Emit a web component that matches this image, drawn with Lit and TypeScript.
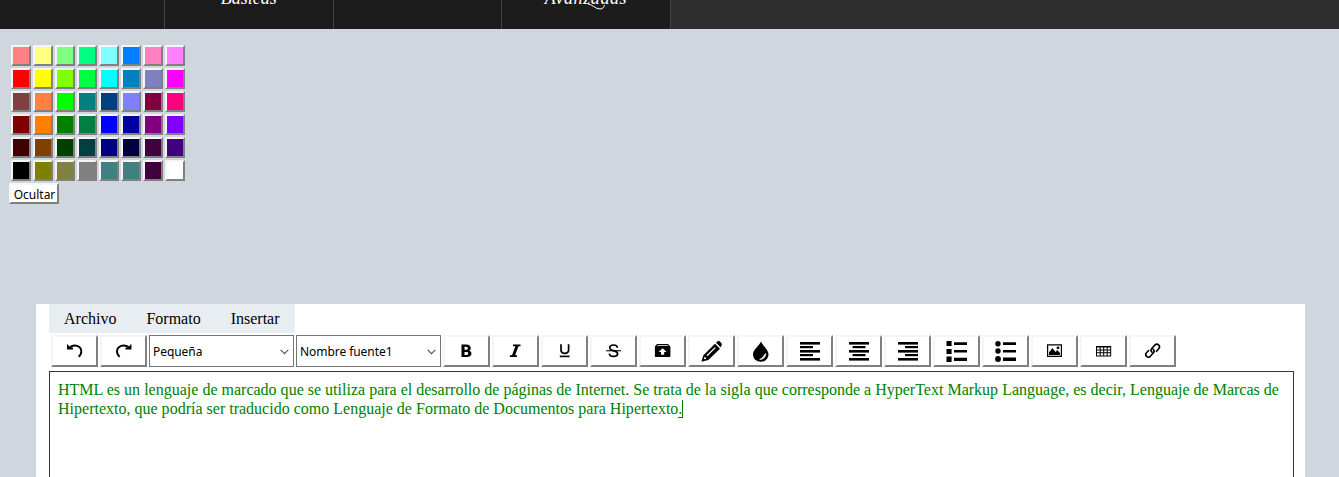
import { LitElement, html, css, svg } from "lit";
import { customElement } from "lit/decorators.js";

const COLORS = [
  "#ff8080","#ffff80","#80ff80","#00ff80","#80ffff","#0080ff","#ff80c0","#ff80ff",
  "#ff0000","#ffff00","#80ff00","#00ff40","#00ffff","#0080c0","#8080c0","#ff00ff",
  "#804040","#ff8040","#00ff00","#008080","#004080","#8080ff","#800040","#ff0080",
  "#800000","#ff8000","#008000","#008040","#0000ff","#0000a0","#800080","#8000ff",
  "#400000","#804000","#004000","#004040","#000080","#000040","#400040","#400080",
  "#000000","#808000","#808040","#808080","#408080","#408080","#400040","#ffffff",
];

const bars = (edge: "l" | "c" | "r") =>
  [20, 13, 20, 13, 20].map((w, i) => {
    const x = 14 + (edge === "l" ? 0 : edge === "c" ? (20 - w) / 2 : 20 - w);
    return svg`<rect x=${x} y=${[7, 11, 15, 19, 23][i]} width=${w} height=${i % 2 ? 2.2 : 2.6}/>`;
  });

// Glyphs share the 47x32 box of a toolbar button.
const ICONS = {
  undo: svg`<path d="M18.5 12.6C23.5 8.4 30 11 30.3 16.2C30.3 18.8 29.4 20.4 27.6 21.8" fill="none" stroke="#000" stroke-width="1.9"/><path d="M16 9.2L17.2 9.8L18.4 12L22 12.8V14.6H16Z"/>`,
  redo: svg`<path d="M29.1 12.6C24.1 8.4 17.3 11 17 16.2C17 18.8 17.9 20.4 19.7 21.8" fill="none" stroke="#000" stroke-width="1.9"/><path d="M31.4 9.2L30.2 9.8L29 12L25.4 12.8V14.6H31.4Z"/>`,
  bold: svg`<path fill-rule="evenodd" d="M18.5 9.5H23.4C28.4 9.5 28.8 14.9 26.2 15.7C29.8 16.7 29.2 22 24 22H18.5ZM21.5 11.7V14.8H23.2C25.5 14.8 25.5 11.7 23.2 11.7ZM21.5 17V19.9H23.5C25.9 19.9 25.9 17 23.5 17Z"/>`,
  italic: svg`<path d="M21 9.5H28.5V11.2H26.5L23.1 20.3H25V22H17.8V20.3H20L23.4 11.2H21Z"/>`,
  underline: svg`<path d="M20 9.2V15C20 19.4 27.6 19.4 27.6 15V9.2" fill="none" stroke="#000" stroke-width="1.7"/><path d="M18.8 20.6H28.6V22.2H18.8Z"/>`,
  strike: svg`<path d="M27.4 12.8C27.2 9 19.8 9.2 19.8 12.8C19.8 14.7 22 15.4 24 15.9C26.4 16.5 27.8 17.2 27.6 18.8C27.2 22.4 19.4 22.2 19.4 18.4" fill="none" stroke="#000" stroke-width="1.7"/><path d="M16.2 15.2H31V16.3H16.2Z"/>`,
  archive: svg`<path fill-rule="evenodd" d="M18 9H29L31.4 11.6V21C31.4 21.6 31 22 30.4 22H16.9C16.3 22 15.9 21.6 15.9 21V11.6ZM18.5 10.3L17.8 11.1H29.5L28.7 10.3ZM23.6 13.2L19.6 17H22V19.7H25.2V17H27.7Z"/>`,
  pencil: svg`<path fill-rule="evenodd" d="M27 8.7L32 13.7L20.3 24.9L13.4 26.8L15.4 20.2ZM16.6 21.6L15.9 24.3L18.5 23.7ZM18.5 20.3L26.8 12.2L27.7 13.1L19.4 21.2Z"/><path d="M28 7.7L29.7 6.2Q30.7 5.4 31.8 6.5L33.3 8.1Q34.5 9.5 33.3 11L32.5 12.3Z"/>`,
  drop: svg`<path d="M24 6.3C23 10.2 16 14.5 16 19.2C16 23.8 19.5 26.7 23.8 26.7C28 26.7 31.5 23.8 31.5 19.2C31.5 14.5 25 10.2 24 6.3Z"/><path d="M28.8 18.4C29 21.5 26.2 24.6 22.7 24.4C26 23.4 26.5 20.5 28.8 18.4Z" fill="#fff" stroke="#fff" stroke-width=".7"/>`,
  left: bars("l"),
  center: bars("c"),
  right: bars("r"),
  squares: svg`<path d="M13.5 6H18.6V11H13.5ZM13.5 14H18.6V19H13.5ZM13.5 21.5H18.6V27H13.5ZM21 7.3H34V9.9H21ZM21 15H34V17.6H21ZM21 22.7H34V26H21Z"/>`,
  dots: svg`<circle cx="16" cy="8.7" r="2.7"/><circle cx="16" cy="16" r="2.7"/><circle cx="16" cy="24" r="2.9"/><path d="M21 7.3H34V9.9H21ZM21 15H34V17.6H21ZM21 22.5H34V26H21Z"/>`,
  image: svg`<path fill-rule="evenodd" d="M16 9.2H31V22H16ZM17.2 10.4V20.8H29.8V10.4Z"/><path d="M18 20V17.5L21.3 13L24.5 17L26.3 15L29 18V20Z"/><circle cx="27" cy="12.8" r="1.4"/>`,
  table: svg`<path fill-rule="evenodd" d="M16 11H31.2V21.4H16ZM17 12.6V14.4H19.7V12.6ZM20.7 12.6V14.4H23.2V12.6ZM24.2 12.6V14.4H26.7V12.6ZM27.7 12.6V14.4H30.2V12.6ZM17 15.4V17.3H19.7V15.4ZM20.7 15.4V17.3H23.2V15.4ZM24.2 15.4V17.3H26.7V15.4ZM27.7 15.4V17.3H30.2V15.4ZM17 18.3V20.4H19.7V18.3ZM20.7 18.3V20.4H23.2V18.3ZM24.2 18.3V20.4H26.7V18.3ZM27.7 18.3V20.4H30.2V18.3Z"/>`,
  link: svg`<g fill="none" stroke="#000" stroke-width="1.6" stroke-linecap="round"><path d="M23 17.3C21.8 16 21.8 14.5 22.8 13.5L25.8 10.1C28.3 7.5 32 10.8 29.8 13.7L27.5 16.3"/><path d="M24 14C25.4 15.3 25.3 16.9 24.3 18L21.3 21.3C18.7 23.7 15.2 20.5 17.5 17.7L19.6 15.5"/></g>`,
};

@customElement("tool-button")
class ToolButton extends LitElement {
  static properties = { icon: {} };
  declare icon: keyof typeof ICONS;
  static styles = css`
    :host { display: block; width: 47px; height: 32px; }
    .button {
      box-sizing: border-box; display: block; width: 47px; height: 32px; padding: 0; background: #fff; overflow: hidden;
      border: 2px solid; border-color: #f5f5f5 #808080 #808080 #f5f5f5;
    }
    .glyph { display: block; width: 47px; height: 32px; margin: -2px; }
  `;
  render() {
    return html`<button class="button"><svg class="glyph" viewBox="0 0 47 32">${ICONS[this.icon]}</svg></button>`;
  }
}

@customElement("app-root")
class AppRoot extends LitElement {
  static styles = css`
    * { box-sizing: border-box; }
    :host { display: flex; flex-direction: column; height: 477px; overflow: hidden; background: #cfd6de; font-family: "Liberation Serif", serif; }
    .nav { display: flex; flex: none; height: 29px; background: #2e2e2e; overflow: hidden; }
    .item { position: relative; width: 168.6px; height: 29px; background: #1c1c1c; border-right: 1px solid #444; color: #fff; text-align: center;
      font: italic 18px/20px "Z003", "URW Chancery L", "Liberation Serif", cursive; }
    .item:first-child { width: 165px; }
    .label { display: block; margin-top: -12px; }
    .wide { letter-spacing: .6px; }
    .swash { position: absolute; left: 85px; top: 3px; width: 20px; height: 8px; fill: none; stroke: #fff; stroke-width: 1; }
    .palette { display: grid; grid-template-columns: repeat(8, 20px); grid-auto-rows: 21px; gap: 2px; padding: 16px 0 0 11px; flex: none; }
    .swatch { border: 2px solid; border-color: #f5f5f5 #808080 #808080 #f5f5f5; padding: 0; }
    .hide { flex: none; width: 50px; height: 21px; margin: 2px 0 0 9px; padding: 1px 0 0 1px; border: 2px solid; border-color: #f5f5f5 #808080 #808080 #f5f5f5;
      background: #fff; color: #000; font: 12px/17px "Noto Sans", sans-serif; white-space: nowrap; }
    .editor { flex: 1; display: flex; flex-direction: column; align-items: flex-start; margin: 100px 34px 0 36px; padding: 0 11px 0 13px; background: #fff; }
    .menu { display: flex; gap: 30px; width: 246px; height: 29px; padding-left: 15px; background: #e8edf1; font-size: 16px; line-height: 29px; white-space: nowrap; }
    .tools { display: flex; gap: 2px; height: 32px; margin: 2px 0 4px 2px; }
    .select { display: flex; align-items: center; justify-content: space-between; width: 145px; height: 32px; border: 1px solid #767676; padding: 1px 4px 0 3px;
      font: 12px/30px "Noto Sans", sans-serif; letter-spacing: -.06px; color: #000; }
    .select:first-of-type { margin-left: -2px; }
    .tools > .select { margin-left: 0; }
    .chevron { width: 9px; height: 6px; fill: none; stroke: #555; stroke-width: 1.2; }
    .page { flex: 1; align-self: stretch; border: 1px solid #5c1f3d; border-bottom: 0; padding: 8px 8px; color: #008000; font-size: 16px; line-height: 19px; letter-spacing: .006px; }
    .line { display: block; white-space: nowrap; }
    .caret { display: inline-block; width: 5px; height: 18px; margin-left: -4px; vertical-align: -4px; border: solid #008000; border-width: 0 1px 1px 0; }
  `;
  private select(text: string) {
    return html`<div class="select"><span>${text}</span><svg class="chevron" viewBox="0 0 9 6"><path d="M.7.8L4.5 4.6L8.3.8"/></svg></div>`;
  }
  private buttons(names: string[]) {
    return names.map((n) => html`<tool-button .icon=${n}></tool-button>`);
  }
  render() {
    return html`
      <nav class="nav">
        <div class="item"></div>
        <div class="item"><span class="label">Basicas</span></div>
        <div class="item"></div>
        <div class="item"><span class="label wide">Avanzadas</span><svg class="swash" viewBox="0 0 20 8"><path d="M1 1C5 1 8 6 13 6C16 6 17 4 17.5 2"/></svg></div>
      </nav>
      <div class="palette">${COLORS.map((c) => html`<button class="swatch" style="background:${c}"></button>`)}</div>
      <button class="hide">Ocultar</button>
      <main class="editor">
        <div class="menu"><span>Archivo</span><span>Formato</span><span>Insertar</span></div>
        <div class="tools">
          ${this.buttons(["undo", "redo"])}${this.select("Pequeña")}${this.select("Nombre fuente1")}
          ${this.buttons(["bold", "italic", "underline", "strike", "archive", "pencil", "drop", "left", "center", "right", "squares", "dots", "image", "table", "link"])}
        </div>
        <div class="page">
          <span class="line">HTML es un lenguaje de marcado que se utiliza para el desarrollo de páginas de Internet. Se trata de la sigla que corresponde a HyperText Markup Language, es decir, Lenguaje de Marcas de</span>
          <span class="line">Hipertexto, que podría ser traducido como Lenguaje de Formato de Documentos para Hipertexto.<span class="caret"></span></span>
        </div>
      </main>`;
  }
}
